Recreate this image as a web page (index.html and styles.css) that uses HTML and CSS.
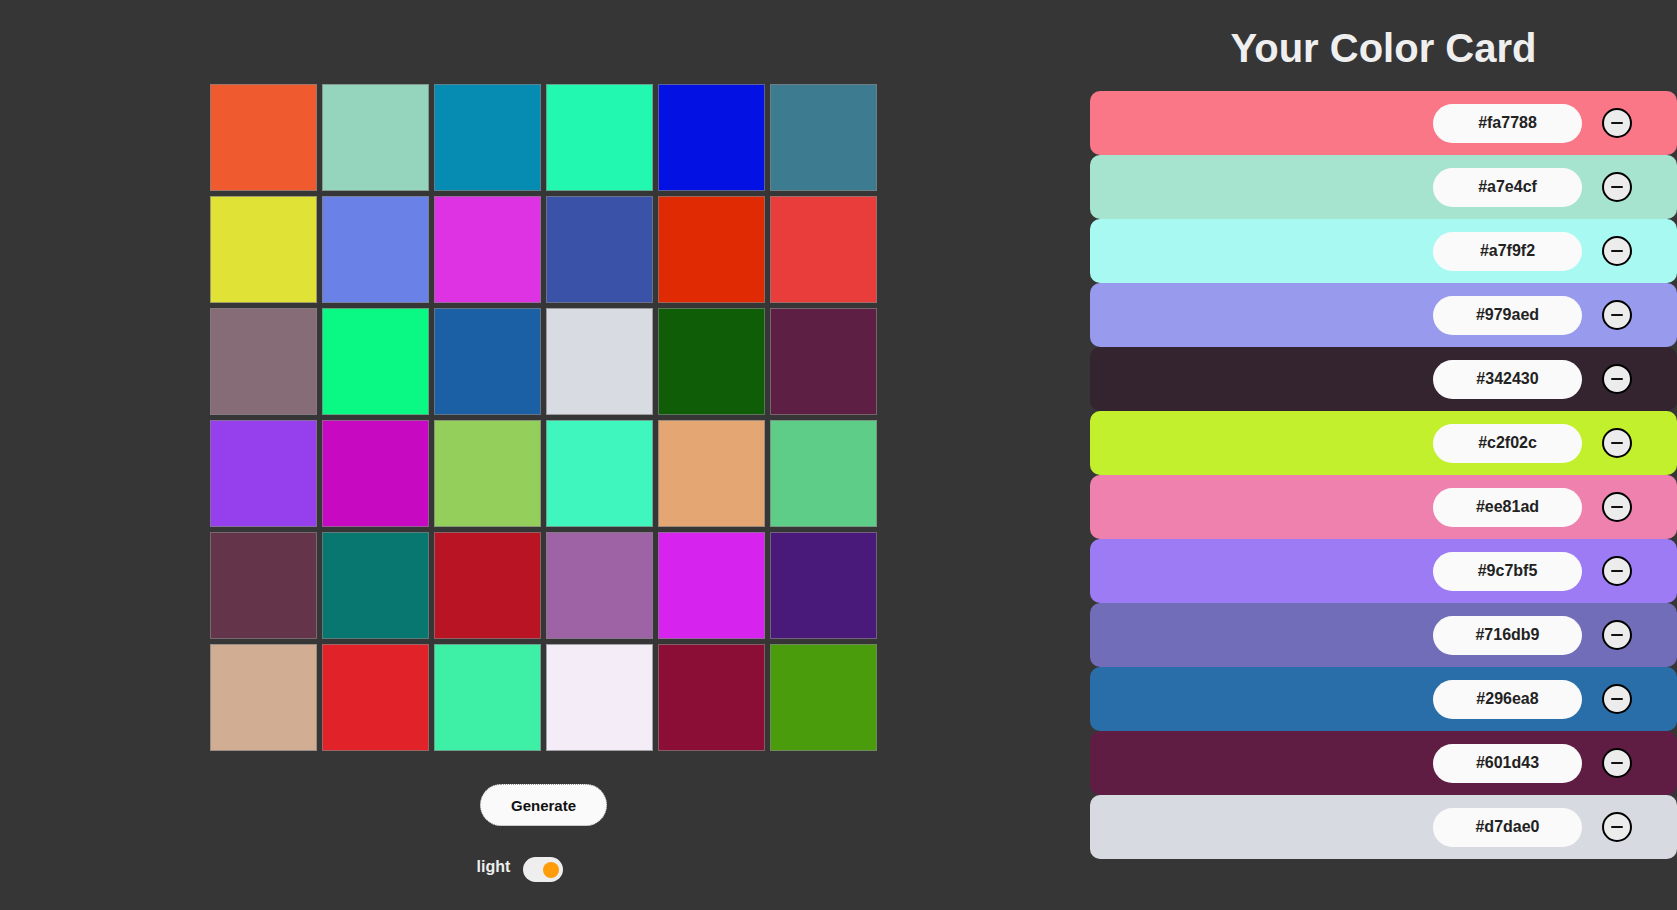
FILE: index.html
```html
<!DOCTYPE html>
<html lang="en">
<head>
<meta charset="utf-8">
<title>Your Color Card</title>
<link rel="stylesheet" href="styles.css">
</head>
<body>
<div class="app">
  <section class="picker">
    <div class="palette">
      <div class="cell" style="background:#f05a2f"></div>
      <div class="cell" style="background:#95d5bd"></div>
      <div class="cell" style="background:#068bb3"></div>
      <div class="cell" style="background:#22f8b0"></div>
      <div class="cell" style="background:#0312e3"></div>
      <div class="cell" style="background:#3d7c90"></div>

      <div class="cell" style="background:#e1e236"></div>
      <div class="cell" style="background:#6a82e8"></div>
      <div class="cell" style="background:#de33e3"></div>
      <div class="cell" style="background:#3b52a9"></div>
      <div class="cell" style="background:#e02a04"></div>
      <div class="cell" style="background:#e83d3b"></div>

      <div class="cell" style="background:#866c76"></div>
      <div class="cell" style="background:#0af884"></div>
      <div class="cell" style="background:#1b60a5"></div>
      <div class="cell" style="background:#d9dbe2"></div>
      <div class="cell" style="background:#0f5d07"></div>
      <div class="cell" style="background:#5e1f44"></div>

      <div class="cell" style="background:#9540ec"></div>
      <div class="cell" style="background:#c70ac2"></div>
      <div class="cell" style="background:#95cf5b"></div>
      <div class="cell" style="background:#3ff6bf"></div>
      <div class="cell" style="background:#e4a673"></div>
      <div class="cell" style="background:#5ecd87"></div>

      <div class="cell" style="background:#63344a"></div>
      <div class="cell" style="background:#087770"></div>
      <div class="cell" style="background:#b91424"></div>
      <div class="cell" style="background:#9e63a5"></div>
      <div class="cell" style="background:#d623ee"></div>
      <div class="cell" style="background:#4a1a7a"></div>

      <div class="cell" style="background:#d1ad94"></div>
      <div class="cell" style="background:#e22229"></div>
      <div class="cell" style="background:#3ef0a6"></div>
      <div class="cell" style="background:#f4edf8"></div>
      <div class="cell" style="background:#8a0e35"></div>
      <div class="cell" style="background:#4a9c0d"></div>
    </div>
    <button class="generate" type="button">Generate</button>
    <div class="mode">
      <span class="mode-label">light</span>
      <span class="switch"><span class="knob"></span></span>
    </div>
  </section>

  <section class="card">
    <h1 class="card-title">Your Color Card</h1>
    <div class="swatches">
      <div class="swatch" style="background:#fa7788"><span class="hex">#fa7788</span><button class="remove" type="button" aria-label="remove"></button></div>
      <div class="swatch" style="background:#a7e4cf"><span class="hex">#a7e4cf</span><button class="remove" type="button" aria-label="remove"></button></div>
      <div class="swatch" style="background:#a7f9f2"><span class="hex">#a7f9f2</span><button class="remove" type="button" aria-label="remove"></button></div>
      <div class="swatch" style="background:#979aed"><span class="hex">#979aed</span><button class="remove" type="button" aria-label="remove"></button></div>
      <div class="swatch" style="background:#342430"><span class="hex">#342430</span><button class="remove" type="button" aria-label="remove"></button></div>
      <div class="swatch" style="background:#c2f02c"><span class="hex">#c2f02c</span><button class="remove" type="button" aria-label="remove"></button></div>
      <div class="swatch" style="background:#ee81ad"><span class="hex">#ee81ad</span><button class="remove" type="button" aria-label="remove"></button></div>
      <div class="swatch" style="background:#9c7bf5"><span class="hex">#9c7bf5</span><button class="remove" type="button" aria-label="remove"></button></div>
      <div class="swatch" style="background:#716db9"><span class="hex">#716db9</span><button class="remove" type="button" aria-label="remove"></button></div>
      <div class="swatch" style="background:#296ea8"><span class="hex">#296ea8</span><button class="remove" type="button" aria-label="remove"></button></div>
      <div class="swatch" style="background:#601d43"><span class="hex">#601d43</span><button class="remove" type="button" aria-label="remove"></button></div>
      <div class="swatch" style="background:#d7dae0"><span class="hex">#d7dae0</span><button class="remove" type="button" aria-label="remove"></button></div>
    </div>
  </section>
</div>
</body>
</html>
```
FILE: styles.css
```css
* {
  box-sizing: border-box;
}

html, body {
  margin: 0;
  padding: 0;
}

body {
  background: #363636;
  font-family: "Liberation Sans", Arial, sans-serif;
  width: 1677px;
  height: 910px;
  overflow: hidden;
}

.app {
  display: grid;
  grid-template-columns: 1087px 587px;
  column-gap: 3px;
}

/* left column */
.picker {
  display: flex;
  flex-direction: column;
  align-items: center;
  padding-top: 84px;
}

.palette {
  display: grid;
  grid-template-columns: repeat(6, 107px);
  grid-auto-rows: 107px;
  gap: 5px;
}

.cell {
  border: 1px solid rgba(128, 128, 128, 0.7);
}

.generate {
  margin-top: 33px;
  width: 127px;
  height: 42px;
  border-radius: 21px;
  border: 1px dotted #9a9a9a;
  background: #fafafa;
  color: #111;
  font-family: "Liberation Sans", Arial, sans-serif;
  font-weight: bold;
  font-size: 15px;
  padding: 0;
}

.mode {
  margin-top: 31px;
  display: flex;
  align-items: flex-start;
  gap: 13px;
  padding-right: 47px;
}

.mode-label {
  color: #eeeeee;
  font-weight: bold;
  font-size: 16px;
  line-height: 18px;
  margin-top: 1px;
}

.switch {
  width: 40px;
  height: 25px;
  border-radius: 13px;
  background: #eeeeee;
  display: flex;
  align-items: center;
  justify-content: flex-end;
  padding-right: 4px;
}

.knob {
  width: 16px;
  height: 16px;
  border-radius: 50%;
  background: #ff9c0a;
}

/* right column */
.card {
  padding-top: 26px;
}

.card-title {
  margin: 0 0 20px;
  text-align: center;
  color: #efefef;
  font-size: 40px;
  line-height: 45px;
  font-weight: bold;
}

.swatches {
  display: flex;
  flex-direction: column;
}

.swatch {
  height: 64px;
  border-radius: 10px;
  display: flex;
  align-items: center;
  justify-content: flex-end;
  gap: 20px;
  padding-right: 45px;
}

.hex {
  width: 149px;
  height: 39px;
  border-radius: 20px;
  background: #fafafa;
  color: #222;
  font-weight: bold;
  font-size: 16px;
  display: flex;
  align-items: center;
  justify-content: center;
}

.remove {
  width: 30px;
  height: 30px;
  border-radius: 50%;
  border: 2px solid #000;
  background: #ececec;
  padding: 0;
  display: flex;
  align-items: center;
  justify-content: center;
}

.remove::before {
  content: "";
  width: 12px;
  height: 2px;
  background: #111;
  border-radius: 1px;
}
```
